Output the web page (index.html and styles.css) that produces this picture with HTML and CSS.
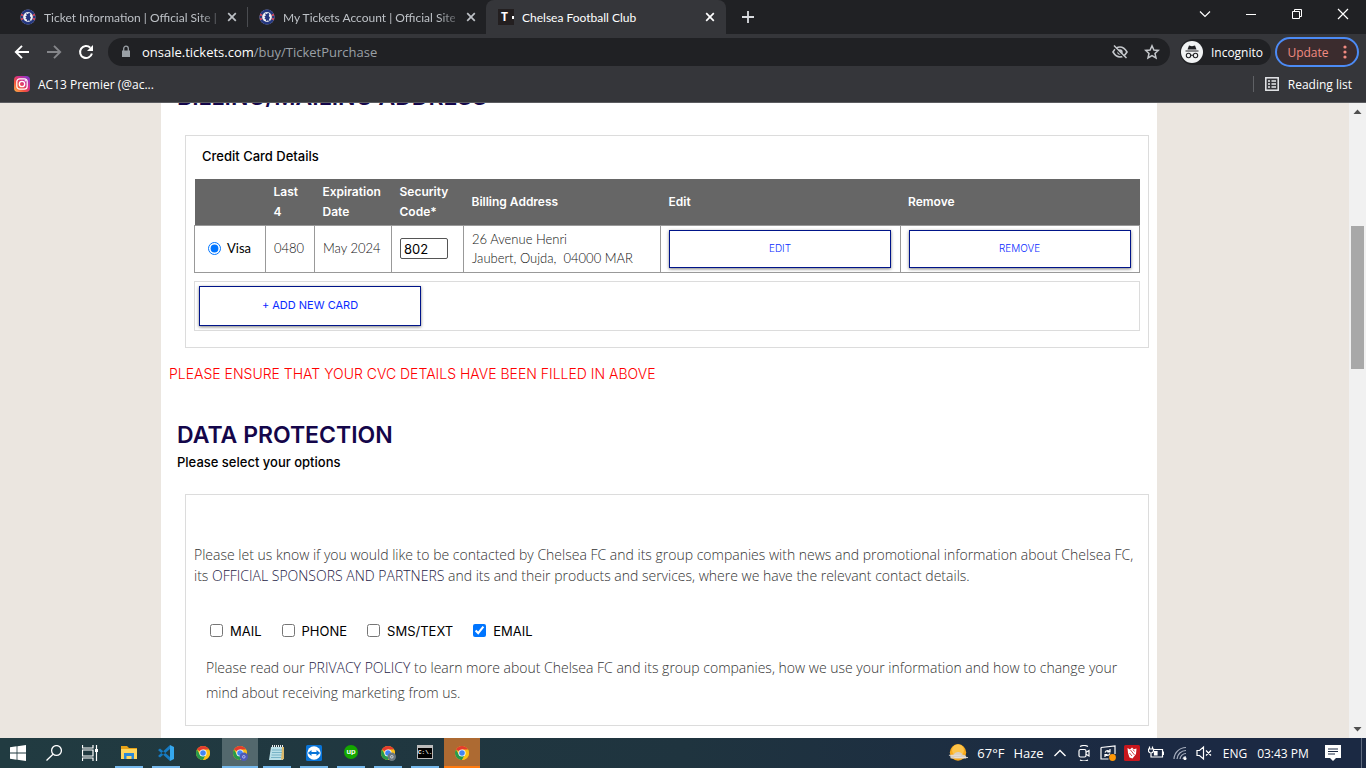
FILE: index.html
```html
<!DOCTYPE html>
<html lang="en">
<head>
<meta charset="utf-8">
<title>Chelsea Football Club</title>
<link rel="stylesheet" href="styles.css">
</head>
<body>
<svg class="defs" aria-hidden="true">
  <symbol id="crest" viewBox="0 0 16 16">
    <circle cx="8" cy="8" r="7.6" fill="#9aa0b4"/>
    <circle cx="8" cy="8" r="6.2" fill="none" stroke="#25377f" stroke-width="2.6"/>
    <path d="M1 5.6 3 6.4M1 10.4 3 9.6M15 5.6 13 6.4M15 10.4 13 9.6" stroke="#d8485c" stroke-width="1.8"/>
    <circle cx="8" cy="8" r="4.7" fill="#f0f1f5"/>
    <path d="M6 4.2 7.6 5 9.4 3.8 10.4 5.2 9.8 7 11 8.4 10 10.4 10.6 12 8.4 11.4 7 12.2 7 10.4 5.4 9.8 6.4 8.6 5.2 7.4 6.8 6.8Z" fill="#23357d"/>
  </symbol>
  <symbol id="close" viewBox="0 0 16 16"><path d="M4.2 4.2 11.8 11.8M11.8 4.2 4.2 11.8" stroke="currentColor" stroke-width="1.7"/></symbol>
  <symbol id="chrome" viewBox="0 0 16 16">
    <circle cx="8" cy="8" r="7" fill="#fbc116"/>
    <path d="M8 8 1.94 4.5A7 7 0 0 1 14.06 4.5Z" fill="#e33b2e"/>
    <path d="M1.94 4.5A7 7 0 0 0 8 15L11 9.7 8 8 5 9.7Z" fill="#269a4b"/>
    <path d="M8 4.5H14.06A7 7 0 0 1 8 15L11 9.7Z" fill="#fbc116"/>
    <circle cx="8" cy="8" r="3.6" fill="#fff"/><circle cx="8" cy="8" r="2.8" fill="#4285f4"/>
  </symbol>
</svg>

<header class="browser">
  <div class="tabstrip">
    <div class="tab">
      <svg class="favicon"><use href="#crest"/></svg>
      <span class="tab-title fade">Ticket Information | Official Site |</span>
      <button class="tab-close" aria-label="Close tab"><svg><use href="#close"/></svg></button>
    </div>
    <div class="tab tab-divided">
      <svg class="favicon"><use href="#crest"/></svg>
      <span class="tab-title fade">My Tickets Account | Official Site</span>
      <button class="tab-close" aria-label="Close tab"><svg><use href="#close"/></svg></button>
    </div>
    <div class="tab tab-active">
      <span class="favicon t-icon">T<i></i></span>
      <span class="tab-title">Chelsea Football Club</span>
      <button class="tab-close" aria-label="Close tab"><svg><use href="#close"/></svg></button>
    </div>
    <button class="new-tab" aria-label="New tab"><svg viewBox="0 0 16 16"><path d="M8 2V14M2 8H14" stroke="currentColor" stroke-width="1.8"/></svg></button>
    <div class="window-controls">
      <button aria-label="Search tabs"><svg viewBox="0 0 16 16"><path d="M3 5.5 8 10.5 13 5.5" fill="none" stroke="currentColor" stroke-width="1.2"/></svg></button>
      <button aria-label="Minimize"><svg viewBox="0 0 16 16"><path d="M3 8.5H13" stroke="currentColor"/></svg></button>
      <button aria-label="Restore"><svg viewBox="0 0 16 16"><path d="M3.5 5.5H10.5V12.5H3.5ZM5.500 5V3.500H12.500V10.500H11" fill="none" stroke="currentColor"/></svg></button>
      <button aria-label="Close"><svg viewBox="0 0 16 16"><path d="M3 3 13 13M13 3 3 13" stroke="currentColor" stroke-width="1.2"/></svg></button>
    </div>
  </div>

  <div class="toolbar">
    <nav class="nav-buttons">
      <button aria-label="Back"><svg viewBox="0 0 16 16"><path d="M15 8H2M8 1.800 1.800 8 8 14.200" fill="none" stroke="currentColor" stroke-width="1.9"/></svg></button>
      <button class="disabled" aria-label="Forward"><svg viewBox="0 0 16 16"><path d="M1 8H14M8 1.800 14.200 8 8 14.200" fill="none" stroke="currentColor" stroke-width="1.9"/></svg></button>
      <button aria-label="Reload"><svg viewBox="0 0 16 16"><path d="M13.900 9.500A6 6 0 1 1 12.300 3.800" fill="none" stroke="currentColor" stroke-width="2"/><path d="M15 1V7H9Z" fill="currentColor"/></svg></button>
    </nav>
    <div class="omnibox">
      <svg class="lock" viewBox="0 0 16 16"><path d="M4 6.500H12V13H4Z" fill="#9aa0a6"/><path d="M5.700 7V4.500A2.300 2.300 0 0 1 10.300 4.500V7" fill="none" stroke="#9aa0a6" stroke-width="1.300"/></svg>
      <a class="url" href="#"><b>onsale.tickets.com</b>/buy/TicketPurchase</a>
      <button aria-label="Third-party cookies blocked"><svg viewBox="0 0 16 16"><path d="M1 8Q4 3 8 3T15 8Q12 13 8 13T1 8Z" fill="none" stroke="currentColor" stroke-width="1.600"/><circle cx="8" cy="8" r="2.700" fill="currentColor"/><path d="M1.500 2.700 13.500 14.700" stroke="#202124" stroke-width="1.500"/><path d="M2 1.500 14.500 14" stroke="currentColor" stroke-width="1.500"/></svg></button>
      <button aria-label="Bookmark this tab"><svg viewBox="0 0 16 16"><path d="M8 1.800 9.900 6 14.300 6.400 11 9.400 12 13.900 8 11.500 4 13.900 5 9.400 1.700 6.400 6.100 6Z" fill="none" stroke="currentColor" stroke-width="1.500"/></svg></button>
    </div>
    <button class="incognito"><svg viewBox="0 0 22 22"><circle cx="11" cy="11" r="11" fill="#f1f3f4"/><path d="M4.500 9.500H17.500V10.500H4.500ZM6.500 8.500 8 4.500 11 5.200 14 4.500 15.500 8.500Z" fill="#202124"/><path d="M9.700 14.500Q11 13.600 12.300 14.500" fill="none" stroke="#202124"/><circle cx="7.500" cy="14.500" r="2.200" fill="none" stroke="#202124" stroke-width="1.100"/><circle cx="14.500" cy="14.500" r="2.200" fill="none" stroke="#202124" stroke-width="1.100"/></svg>Incognito</button>
    <button class="update">Update<svg viewBox="0 0 4 16"><circle cx="2" cy="3" r="1.600"/><circle cx="2" cy="8" r="1.600"/><circle cx="2" cy="13" r="1.600"/></svg></button>
  </div>

  <div class="bookmarks">
    <a href="#"><svg viewBox="0 0 16 16"><defs><linearGradient id="ig" x1="0" y1="1" x2="1" y2="0"><stop offset="0" stop-color="#fdb74a"/><stop offset=".35" stop-color="#f0503e"/><stop offset=".65" stop-color="#cf2e94"/><stop offset="1" stop-color="#6a3bd8"/></linearGradient></defs><rect width="16" height="16" rx="4" fill="url(#ig)"/><rect x="2.800" y="2.800" width="10.400" height="10.400" rx="3" fill="none" stroke="#fff" stroke-width="1.200"/><circle cx="8" cy="8" r="2.700" fill="none" stroke="#fff" stroke-width="1.300"/><circle cx="11.300" cy="4.700" r=".7" fill="#fff"/></svg>AC13 Premier (@ac...</a>
    <a class="reading" href="#"><svg viewBox="0 0 16 16"><rect x="1.800" y="1.800" width="12.400" height="12.400" fill="none" stroke="#e8eaed" stroke-width="1.500"/><path d="M4 5H6M7.500 5H12M4 8H6M7.500 8H12M4 11H6M7.500 11H12" stroke="#e8eaed" stroke-width="1.700"/></svg>Reading list</a>
  </div>
</header>

<div class="viewport">
  <main class="page">
    <h2 class="section-title scrolled">BILLING/MAILING ADDRESS</h2>

    <section class="panel cards">
      <h3 class="panel-title">Credit Card Details</h3>
      <table class="card-table">
        <colgroup><col class="c-type"><col class="c-last"><col class="c-exp"><col class="c-code"><col class="c-addr"><col><col></colgroup>
        <thead><tr><th></th><th>Last 4</th><th>Expiration Date</th><th>Security Code*</th><th>Billing Address</th><th>Edit</th><th>Remove</th></tr></thead>
        <tbody><tr>
          <td><div class="card-type"><input type="radio" id="visa" name="card" checked><label for="visa">Visa</label></div></td>
          <td>0480</td>
          <td>May 2024</td>
          <td><input class="code" type="text" value="802" aria-label="Security Code"></td>
          <td>26 Avenue Henri<br>Jaubert, Oujda,&nbsp; 04000 MAR</td>
          <td><button class="action">EDIT</button></td>
          <td><button class="action">REMOVE</button></td>
        </tr></tbody>
      </table>
      <div class="add-row"><button class="action add">+ ADD NEW CARD</button></div>
    </section>

    <p class="warning">PLEASE ENSURE THAT YOUR CVC DETAILS HAVE BEEN FILLED IN ABOVE</p>

    <h2 class="section-title">DATA PROTECTION</h2>
    <h3 class="subtitle">Please select your options</h3>

    <section class="panel consent">
      <p class="intro">Please let us know if you would like to be contacted by Chelsea FC and its group companies with news and promotional information about Chelsea FC,<br>its <a href="#">OFFICIAL SPONSORS AND PARTNERS</a> and its and their products and services, where we have the relevant contact details.</p>
      <div class="options">
        <label><input type="checkbox">MAIL</label>
        <label><input type="checkbox">PHONE</label>
        <label><input type="checkbox">SMS/TEXT</label>
        <label><input type="checkbox" checked>EMAIL</label>
      </div>
      <p class="policy">Please read our <a href="#">PRIVACY POLICY</a> to learn more about Chelsea FC and its group companies, how we use your information and how to change your<br>mind about receiving marketing from us.</p>
    </section>
  </main>
  <div class="scrollbar">
    <svg viewBox="0 0 17 17"><path d="M4.500 11 8.500 6.500 12.500 11Z" fill="#505050"/></svg>
    <div class="track"><div class="thumb"></div></div>
    <svg viewBox="0 0 17 17"><path d="M4.500 6 8.500 10.500 12.500 6Z" fill="#505050"/></svg>
  </div>
</div>

<footer class="taskbar">
  <button class="sys" aria-label="Start"><svg viewBox="0 0 16 16" fill="#fff"><path d="M0 2.300 6.600 1.300V7.600H0ZM7.400 1.200 16 0V7.600H7.400ZM0 8.400H6.600V14.700L0 13.700ZM7.400 8.400H16V16L7.400 14.800Z"/></svg></button>
  <button class="sys" aria-label="Search"><svg viewBox="0 0 16 16" fill="none" stroke="#fff" stroke-width="1.300"><circle cx="10.500" cy="5.500" r="4.900"/><path d="M7 9.200 .5 15.500"/></svg></button>
  <button class="sys" aria-label="Task View"><svg viewBox="0 0 16 16" fill="none" stroke="#fff" stroke-width="1.200"><path d="M.5 0V3H11V0M.5 16V13H11V16M.5 5H11V11H.500ZM14.500 0V16"/><path d="M13 5.500H16" stroke-width="3"/></svg></button>
  <button class="app" aria-label="File Explorer"><svg viewBox="0 0 16 16"><path d="M0 1H6L8 3H16V14H0Z" fill="#e8a317"/><path d="M0 4H16V14H0Z" fill="#ffd65e"/><path d="M3 14V8H13V14H10.500V11H5.500V14Z" fill="#2b89d8"/></svg></button>
  <button class="app" aria-label="Visual Studio Code"><svg viewBox="0 0 16 16"><path d="M12 0 16 2V14L12 16Z" fill="#35a8ee"/><path d="M12 0V4L2 12.500 0 11ZM12 16V12L2 3.500 0 5Z" fill="#167bc4"/></svg></button>
  <button class="app idle" aria-label="Chrome"><svg><use href="#chrome"/></svg></button>
  <button class="app current" aria-label="Chrome"><svg viewBox="0 0 16 16"><use href="#chrome"/><circle cx="11.800" cy="11.800" r="4.200" fill="#4e5bb5"/><circle cx="11.800" cy="11.800" r="1.300" fill="none" stroke="#c7ccff" stroke-width=".8"/></svg></button>
  <button class="app" aria-label="Notepad"><svg viewBox="0 0 16 16"><path d="M2 2H15L14 15H0Z" fill="#b9e0e8"/><path d="M13 2H15V14L12 15Z" fill="#d9b86c"/><path d="M3 5H13M3 7.500H13M2.500 10H12.500M2 12.500H12" stroke="#65a7bd" stroke-width=".8"/><path d="M3 1H14" stroke="#eee" stroke-width="2" stroke-dasharray="1 1"/></svg></button>
  <button class="app" aria-label="TeamViewer"><svg viewBox="0 0 16 16"><rect width="16" height="16" rx="1.500" fill="#0874d8"/><circle cx="8" cy="8" r="6.700" fill="#fff"/><path d="M1.800 8 5.500 5V7H10.500V5L14.200 8 10.500 11V9H5.500V11Z" fill="#0874d8"/></svg></button>
  <button class="app" aria-label="Upwork"><span class="upwork">up</span></button>
  <button class="app" aria-label="Chrome"><svg viewBox="0 0 16 16"><use href="#chrome"/><circle cx="11.800" cy="11.800" r="4.200" fill="#6b7880"/><circle cx="11.800" cy="11.800" r="1.300" fill="none" stroke="#dfe5e8" stroke-width=".8"/></svg></button>
  <button class="app" aria-label="Command Prompt"><span class="cmd">C:\.</span></button>
  <button class="app alert" aria-label="Chrome"><svg><use href="#chrome"/></svg></button>

  <div class="tray">
    <button class="weather"><svg viewBox="0 0 22 20"><circle cx="11" cy="9.500" r="9" fill="#f9a91b"/><circle cx="11" cy="7" r="6.500" fill="#fdc44a"/><path d="M3 16Q1 12 6 12 8 8 12 9 16 10 16 12 21 12 20 16Z" fill="#d9cfc3"/><path d="M1 12.500H14M7 15H22" stroke="#e9e1d8"/></svg><span>67°F</span><span>Haze</span></button>
    <button aria-label="Show hidden icons"><svg viewBox="0 0 16 16" fill="none" stroke="#fff" stroke-width="1.400"><path d="M2.500 11 8 5.500 13.500 11"/></svg></button>
    <button aria-label="Meet Now"><svg viewBox="0 0 16 16" fill="none" stroke="#fff" stroke-width="1.200"><rect x="3" y="4.500" width="7" height="7.500" rx="1.500"/><path d="M10 7.300 13 5.500V11L10 9.200M4 1.500Q8 -.5 12 1.500M4 15Q8 17 12 15"/></svg></button>
    <button aria-label="Windows Update"><svg viewBox="0 0 16 16" fill="none" stroke="#fff" stroke-width="1.200"><path d="M1 2.500 15 1V9M8.500 14H1V2.500M5 7.500Q6.500 4.800 9.500 6.200M10 4V6.800H7.300M10 8.500Q8.500 11.500 5.300 10M5 12V9.500H7.500"/><circle cx="12.500" cy="12.500" r="3.400" fill="#ff9807" stroke="none"/></svg></button>
    <button aria-label="Antivirus"><svg viewBox="0 0 16 16"><rect width="16" height="16" rx="1.500" fill="#c8161d"/><path d="M3.500 3 6 4.500 8 2.500 9.800 4.200 12.500 3.500 12 9 8.500 13.500 5.500 12.500 4 8Z" fill="#fff"/><path d="M6.500 5 10.500 10M5.500 8 8 11M9 4.500 10.500 6.500" stroke="#c8161d" stroke-width=".8"/></svg></button>
    <button aria-label="Battery"><svg viewBox="0 0 16 16" fill="none" stroke="#fff" stroke-width="1.200"><path d="M5 4.500H14.500V12H5M15.500 6.500V10M1.500 1.500V4M4.500 1.500V4M.5 4H5.500V6Q5 8 3 8 1 8 .500 6ZM3 8V12H5"/><path d="M6.500 6.500H9V10H6.500Z" fill="#fff"/></svg></button>
    <button aria-label="Network"><svg viewBox="0 0 16 16" fill="none" stroke="#fff" stroke-width="1.200"><g stroke="#aab2c2"><path d="M2 14A12 12 0 0 1 14 2.500M5 14A9 9 0 0 1 14 5.500M8 14A6 6 0 0 1 14 8.500M11 14A3 3 0 0 1 14 11.500"/></g><circle cx="13" cy="13.500" r="1" fill="#fff"/></svg></button>
    <button aria-label="Volume muted"><svg viewBox="0 0 16 16" fill="none" stroke="#fff" stroke-width="1.200"><path d="M1 5.500H3.500L7.500 2V14L3.500 10.500H1ZM10 5.500 15 10.500M15 5.500 10 10.500"/></svg></button>
    <button class="lang">ENG</button>
    <button class="clock">03:43 PM</button>
    <button class="notes" aria-label="Notifications"><svg viewBox="0 0 16 16"><path d="M0 0H16V13H11L8 16 5 13H0Z" fill="#fff"/><path d="M3 4H13M3 6.500H13M3 9H10" stroke="#1b2943" stroke-width="1.200"/></svg></button>
    <span class="peek"></span>
  </div>
</footer>
</body>
</html>
```
FILE: styles.css
```css
* { box-sizing: border-box; }
body {
  margin: 0;
  height: 100vh;
  display: flex;
  flex-direction: column;
  overflow: hidden;
  font-family: "Open Sans", "Noto Sans", sans-serif;
  font-size: 12px;
  background: #fff;
}
.defs { width: 0; height: 0; position: absolute; }
button {
  padding: 0;
  border: 0;
  background: none;
  color: inherit;
  font: inherit;
  display: flex;
  align-items: center;
  justify-content: center;
}
a { color: inherit; text-decoration: none; }
h2, h3, p { margin: 0; }
svg { width: 16px; height: 16px; display: block; flex: none; }

/* Browser chrome */
.browser { flex: none; background: #35363a; color: #fff; border-bottom: 1px solid #5b5c60; }
.tabstrip { display: flex; height: 34px; padding-left: 8px; background: #202124; }
.tab { display: flex; align-items: center; width: 239px; padding: 0 7px 0 12px; gap: 8px; color: #bdc1c6; }
.tab-divided { background: linear-gradient(#4a4c50, #4a4c50) 0 50% / 1px 20px no-repeat; }
.tab-active { width: 240px; padding-right: 8px; background: #35363a; color: #fff; border-radius: 8px 8px 0 0; }
.favicon { width: 16px; height: 16px; flex: none; }
.t-icon { background: #231f20; color: #fff; font: 700 12px/16px "Open Sans", sans-serif; display: flex; align-items: center; justify-content: space-between; padding-left: 3px; }
.t-icon i { width: 2px; height: 3px; background: #fff; }
.tab-title { flex: 1; overflow: hidden; white-space: nowrap; font-family: Lato, "Open Sans", sans-serif; }
.fade { -webkit-mask-image: linear-gradient(90deg, #000 90%, rgba(0, 0, 0, .4)); mask-image: linear-gradient(90deg, #000 90%, rgba(0, 0, 0, .4)); }
.new-tab { width: 44px; color: #dadce0; }
.window-controls { display: flex; margin-left: auto; }
.window-controls button { width: 46px; height: 28px; }

.toolbar { display: flex; align-items: center; height: 36px; padding: 0 7px 0 6px; }
.nav-buttons { display: flex; margin-right: 6px; }
.nav-buttons button { width: 32px; height: 28px; }
.disabled { color: #85868a; }
.omnibox { flex: 1; display: flex; align-items: center; height: 28px; padding: 0 10px; border-radius: 14px; background: #202124; color: #c4c7cb; gap: 16px; margin-right: 10px; }
.lock { margin-right: -8px; }
.url { flex: 1; color: #9aa0a6; font-size: 13px; }
.url b { font-weight: 400; color: #fff; }
.incognito { height: 26px; gap: 8px; padding: 0 8px 0 1px; border-radius: 13px; background: #202124; margin-right: 4px; }
.incognito svg { width: 22px; height: 22px; }
.update { height: 30px; width: 84px; gap: 14px; border: 2px solid #4c8bf5; border-radius: 15px; background: #3b2c2e; color: #f28b82; }
.update svg { width: 4px; height: 16px; fill: currentColor; }
.bookmarks { display: flex; align-items: center; justify-content: space-between; height: 32px; padding: 0 14px 4px; }
.bookmarks a { display: flex; align-items: center; gap: 8px; }
.bookmarks .reading { border-left: 1px solid #5f6165; padding-left: 10px; height: 16px; }

/* Ticket page */
.viewport { flex: 1; min-height: 0; display: flex; overflow: hidden; background: #ebe6e0; }
.page { flex: 1; margin: 0 192px 0 161px; padding: 0 8px; background: #fff; font-family: Inter, "Open Sans", sans-serif; font-size: 13px; color: #333; }
.section-title { padding-left: 8px; font-size: 23px; line-height: 28px; font-weight: 600; color: #14064a; }
.scrolled { margin-top: -20px; }
.panel { margin: 0 0 0 16px; border: 1px solid #dcdcdc; }
.cards { margin-top: 24px; padding: 8px 8px 16px; }
.panel-title { padding-left: 8px; font-size: 13px; line-height: 24px; font-weight: 500; color: #000; margin-bottom: 11px; }
.card-table { width: 100%; table-layout: fixed; border-collapse: collapse; line-height: 19px; }
.c-type { width: 71px; }
.c-last { width: 49px; }
.c-exp { width: 77px; }
.c-code { width: 72px; }
.c-addr { width: 197px; }
.card-table th { height: 46px; padding: 2px 8px; background: #666; color: #fff; font-size: 12px; font-weight: 600; line-height: 20px; text-align: left; }
.card-table td { height: 47px; padding: 4px 8px; border: 1px solid #999; font-family: Lato, Inter, sans-serif; font-weight: 300; font-size: 13px; color: #111; }
.card-type { display: flex; align-items: center; gap: 6px; padding-left: 5px; color: #000; }
.card-type input { margin: 0; }
.card-type label { font-weight: 400; }
.code { width: 48px; height: 21px; padding: 1px 3px; border: 1px solid #555; border-radius: 2px; font: 13px Inter, sans-serif; color: #000; }
.action { width: 100%; max-width: 222px; height: 38px; padding-bottom: 2px; border: 1px solid #001489; background: #fff; color: #0a2bff; font: 300 10px Inter, sans-serif; box-shadow: 0 1px 3px rgba(0, 0, 0, .5); }
.add-row { margin-top: 8px; padding: 4px; border: 1px solid #dcdcdc; }
.add { height: 40px; font-size: 11px; font-weight: 400; }
.warning { margin: 16px 0 37px; font-size: 14px; line-height: 20px; font-weight: 300; color: #f00; }
.subtitle { padding-left: 8px; font-size: 13px; line-height: 20px; font-weight: 500; color: #000; margin: 3px 0 22px; }
.consent { padding: 49px 8px 20px; font-family: "Open Sans", Inter, sans-serif; font-size: 14px; font-weight: 300; }
.intro { line-height: 21px; }
.intro a, .policy a { color: #251a45; }
.options { display: flex; gap: 20px; margin: 35px 0 14px; padding-left: 16px; color: #000; font-family: Inter, sans-serif; font-size: 13px; font-weight: 400; line-height: 20px; }
.options label { display: flex; align-items: center; gap: 7px; }
.options input { margin: 0; }
.policy { padding: 0 8px 0 12px; line-height: 25px; }

.scrollbar { width: 17px; display: flex; flex-direction: column; background: #f1f1f1; }
.scrollbar svg { width: 17px; height: 17px; }
.track { flex: 1; display: flex; flex-direction: column; padding: 106px 0 0 2px; }
.thumb { width: 13px; height: 143px; background: #a8a8a8; }

/* Taskbar */
.taskbar { flex: none; display: flex; height: 30px; background: linear-gradient(90deg, #213b41, #1f343f 50%, #1b2943 85%); color: #fff; }
.sys { width: 36px; }
.app { width: 28px; margin-right: 9px; border-bottom: 2px solid #76b9ed; }
.sys + .app { margin-left: 7px; }
.app svg { margin-top: 2px; }
.idle { border-color: transparent; }
.current { width: 36px; margin: 0 5px 0 -4px; background: #53686d; }
.alert { width: 36px; margin: 0 0 0 -4px; background: #ad6a32; border-color: #ff7a0f; }
.upwork { width: 14px; height: 14px; border-radius: 50%; background: #14a800; font: 700 8px/12px Lato, sans-serif; }
.cmd { width: 16px; height: 14px; border: 1px solid #bbb; border-top-width: 3px; background: #000; font: 700 6px/10px "Liberation Mono", monospace; }
.tray { margin-left: auto; display: flex; align-items: center; }
.tray button { height: 30px; width: 24px; }
.tray .weather { width: 104px; gap: 9px; font-size: 13px; }
.weather svg { width: 20px; height: 20px; }
.tray .lang { width: 38px; }
.tray .clock { width: 58px; }
.tray .notes { width: 41px; }
.peek { width: 1px; height: 30px; margin: 0 4px 0 8px; background: #5f6b7f; }
```
